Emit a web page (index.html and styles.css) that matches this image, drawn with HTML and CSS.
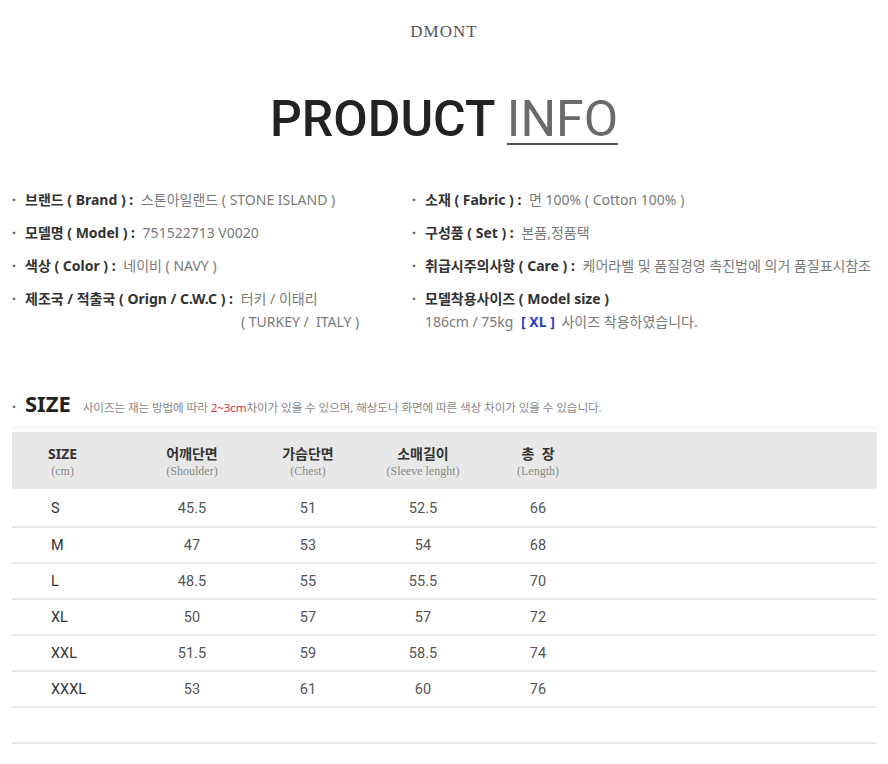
FILE: index.html
```html
<!DOCTYPE html>
<html lang="ko">
<head>
<meta charset="utf-8">
<title>DMONT Product Info</title>
<link rel="stylesheet" href="styles.css">
</head>
<body>
<div class="page">
  <header class="brand">DMONT</header>
  <h1 class="title"><span class="t-dark">PRODUCT</span> <span class="t-light">INFO</span></h1>

  <section class="info">
    <ul class="info-col">
      <li><span class="dot">·</span><b>브랜드 ( Brand ) :</b> <span class="val">스톤아일랜드 ( STONE ISLAND )</span></li>
      <li><span class="dot">·</span><b>모델명 ( Model ) :</b> <span class="val">751522713 V0020</span></li>
      <li><span class="dot">·</span><b>색상 ( Color ) :</b> <span class="val">네이비 ( NAVY )</span></li>
      <li><span class="dot">·</span><b>제조국 / 적출국 ( Orign / C.W.C ) :</b> <span class="val">터키 / 이태리</span>
        <div class="val sub-line indent">( TURKEY /&nbsp; ITALY )</div></li>
    </ul>
    <ul class="info-col">
      <li><span class="dot">·</span><b>소재 ( Fabric ) :</b> <span class="val">면 100% ( Cotton 100% )</span></li>
      <li><span class="dot">·</span><b>구성품 ( Set ) :</b> <span class="val">본품,정품택</span></li>
      <li><span class="dot">·</span><b>취급시주의사항 ( Care ) :</b> <span class="val">케어라벨 및 품질경영 촉진법에 의거 품질표시참조</span></li>
      <li><span class="dot">·</span><b>모델착용사이즈 ( Model size )</b>
        <div class="val sub-line">186cm / 75kg <span class="xl">[ XL ]</span> 사이즈 착용하였습니다.</div></li>
    </ul>
  </section>

  <section class="size">
    <div class="size-head">
      <span class="dot big-dot">·</span><span class="size-title">SIZE</span>
      <span class="size-note">사이즈는 재는 방법에 따라 <em>2~3cm</em>차이가 있을 수 있으며, 해상도나 화면에 따른 색상 차이가 있을 수 있습니다.</span>
    </div>
    <div class="table">
      <div class="row head">
        <div class="cell first"><span class="hcell"><b>SIZE</b><small>(cm)</small></span></div>
        <div class="cell"><b>어깨단면</b><small>(Shoulder)</small></div>
        <div class="cell"><b>가슴단면</b><small>(Chest)</small></div>
        <div class="cell"><b>소매길이</b><small>(Sleeve lenght)</small></div>
        <div class="cell"><b>총&nbsp; 장</b><small>(Length)</small></div>
        <div class="cell"></div>
      </div>
      <div class="row data firstrow"><div class="cell first">S</div><div class="cell">45.5</div><div class="cell">51</div><div class="cell">52.5</div><div class="cell">66</div><div class="cell"></div></div>
      <div class="row data"><div class="cell first">M</div><div class="cell">47</div><div class="cell">53</div><div class="cell">54</div><div class="cell">68</div><div class="cell"></div></div>
      <div class="row data"><div class="cell first">L</div><div class="cell">48.5</div><div class="cell">55</div><div class="cell">55.5</div><div class="cell">70</div><div class="cell"></div></div>
      <div class="row data"><div class="cell first">XL</div><div class="cell">50</div><div class="cell">57</div><div class="cell">57</div><div class="cell">72</div><div class="cell"></div></div>
      <div class="row data"><div class="cell first">XXL</div><div class="cell">51.5</div><div class="cell">59</div><div class="cell">58.5</div><div class="cell">74</div><div class="cell"></div></div>
      <div class="row data"><div class="cell first">XXXL</div><div class="cell">53</div><div class="cell">61</div><div class="cell">60</div><div class="cell">76</div><div class="cell"></div></div>
      <div class="row data"><div class="cell first"></div><div class="cell"></div><div class="cell"></div><div class="cell"></div><div class="cell"></div><div class="cell"></div></div>
    </div>
  </section>
</div>
</body>
</html>
```

FILE: styles.css
```css
* { box-sizing: border-box; }
html, body { margin: 0; padding: 0; background: #fff; }
body {
  font-family: "Noto Sans", "Noto Sans CJK KR", sans-serif;
  color: #333;
  width: 888px;
}
.page { padding-top: 20px; }

.brand {
  text-align: center;
  font-family: "Liberation Serif", serif;
  font-size: 17px;
  letter-spacing: 1px;
  color: #555;
  line-height: 24px;
}

.title {
  margin: 45px 0 0;
  text-align: center;
  font-family: Roboto, "Noto Sans", sans-serif;
  font-weight: 500;
  font-size: 50px;
  line-height: 60px;
  letter-spacing: 0;
}
.t-dark { color: #222; }
.t-light {
  color: #6a6a6a;
  font-weight: 400;
  text-decoration: underline;
  text-decoration-color: #555;
  text-decoration-thickness: 2px;
  text-underline-offset: 7px;
}

.info {
  display: grid;
  grid-template-columns: 400px 488px;
  margin-top: 40px;
  font-size: 14px;
}
.info-col { list-style: none; margin: 0; padding: 0 0 0 12px; }
.info-col li { line-height: 22px; margin-bottom: 11px; white-space: nowrap; }
.info-col b { font-weight: 700; color: #333; }
.dot { display: inline-block; width: 13px; color: #555; font-weight: 700; }
.val { color: #7a7a7a; margin-left: 4px; }
.sub-line { margin-left: 13px; margin-top: 1px; }
.sub-line.indent { margin-left: 229px; }
.xl { color: #2a3ec9; font-weight: 700; margin: 0 3px 0 4px; }

.size { margin-top: 44px; }
.size-head { display: flex; align-items: baseline; padding-left: 12px; height: 26px; }
.big-dot { font-size: 14px; }
.size-title { font-size: 22px; font-weight: 700; color: #222; }
.size-note { font-size: 11.6px; color: #888; margin-left: 12px; letter-spacing: -0.1px; }
.size-note em { font-style: normal; color: #d9323a; }

.table {
  margin: 13px 11px 0 12px;
  border-top: 1px solid #ececec;
  padding-top: 4px;
}
.row {
  display: grid;
  grid-template-columns: 116px 128px 104px 126px 104px 1fr;
  align-items: center;
}
.row.head {
  background: #e8e8e8;
  height: 57px;
  padding-top: 2px;
}
.row.head .cell { display: flex; flex-direction: column; align-items: center; }
.row.head .cell b { font-size: 14px; font-weight: 700; color: #333; line-height: 19px; }
.row.head .cell small {
  font-family: "Liberation Serif", serif;
  font-size: 12px;
  color: #8a8a8a;
  line-height: 17px;
}
.row.head .cell.first { align-items: flex-start; padding-left: 36px; }
.hcell { display: flex; flex-direction: column; align-items: center; }

.row.data {
  height: 36px;
  border-bottom: 2px solid #e8e8e8;
  font-family: Roboto, "Noto Sans", sans-serif;
  font-size: 14.5px;
  color: #555;
}
.row.data.firstrow { height: 39px; padding-top: 1px; }
.row.data .cell { text-align: center; }
.row.data .cell.first { text-align: left; padding-left: 39px; color: #333; }
```
